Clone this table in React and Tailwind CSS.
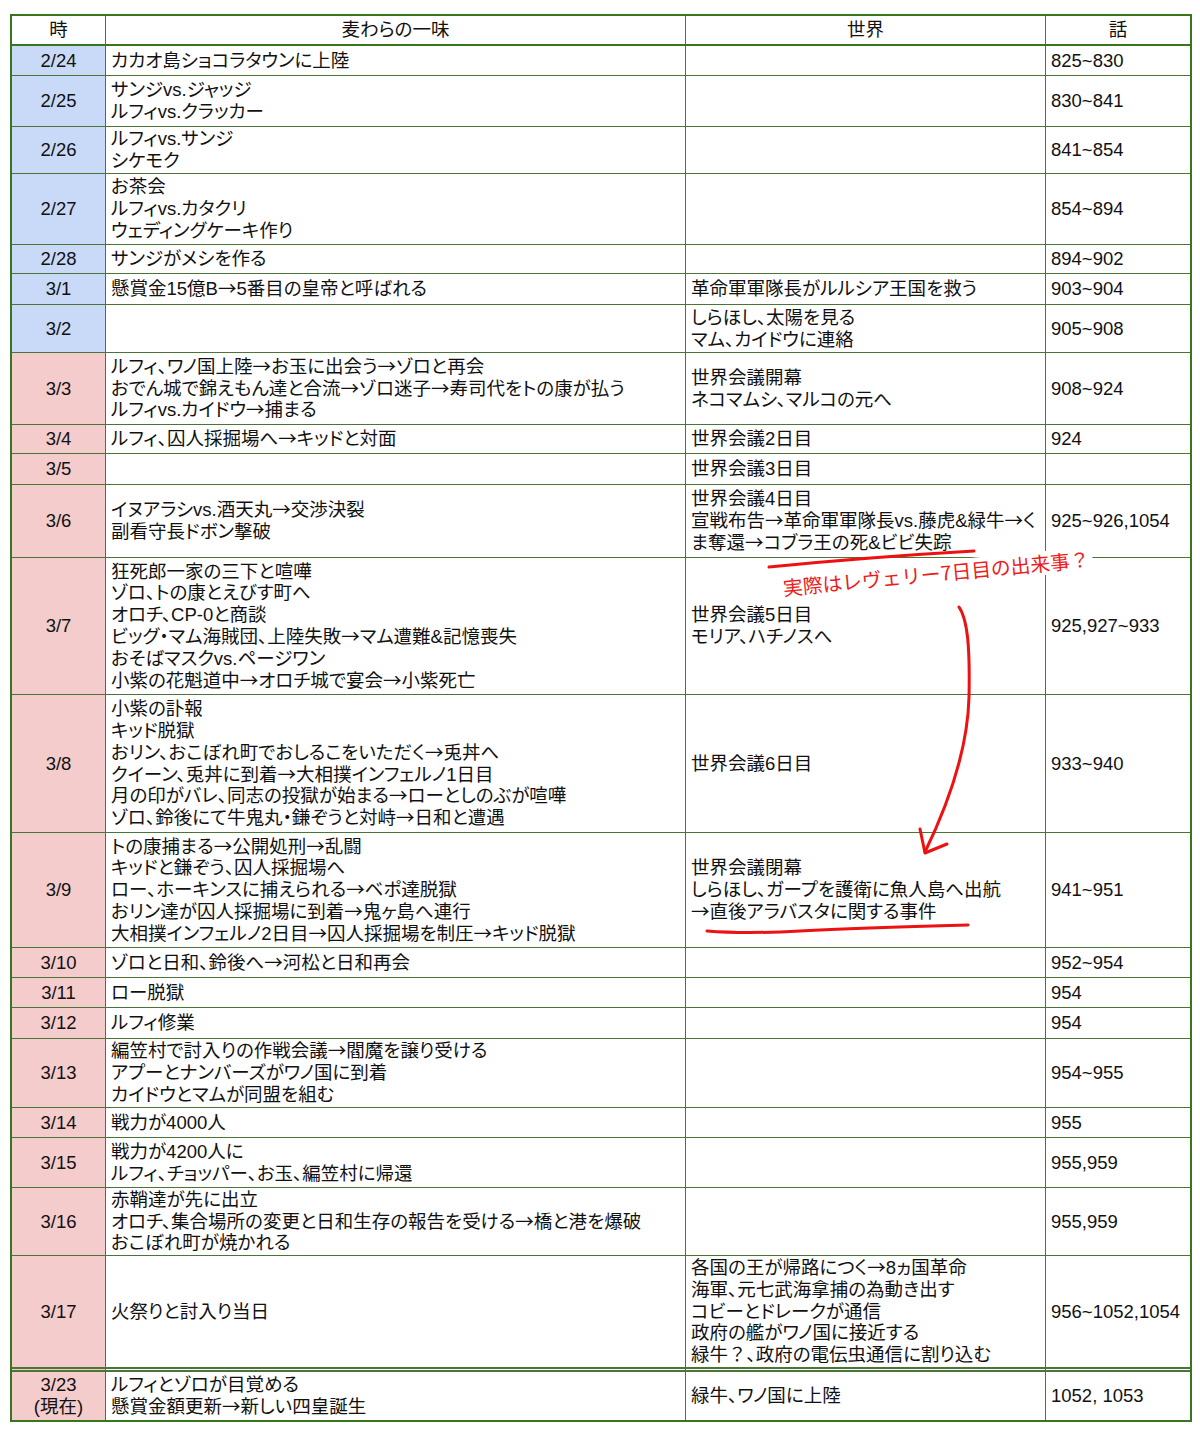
import React from "react";

const BLUE = "bg-[#c9daf8]";
const PINK = "bg-[#f4cccc]";

const rows = [
  { t: ["2/24"], a: ["カカオ島ショコラタウンに上陸"], w: [], n: "825~830", h: "h-[30px]", c: BLUE },
  { t: ["2/25"], a: ["サンジvs.ジャッジ", "ルフィvs.クラッカー"], w: [], n: "830~841", h: "h-[51px]", c: BLUE },
  { t: ["2/26"], a: ["ルフィvs.サンジ", "シケモク"], w: [], n: "841~854", h: "h-[47px]", c: BLUE },
  { t: ["2/27"], a: ["お茶会", "ルフィvs.カタクリ", "ウェディングケーキ作り"], w: [], n: "854~894", h: "h-[71px]", c: BLUE },
  { t: ["2/28"], a: ["サンジがメシを作る"], w: [], n: "894~902", h: "h-[29px]", c: BLUE },
  { t: ["3/1"], a: ["懸賞金15億B→5番目の皇帝と呼ばれる"], w: ["革命軍軍隊長がルルシア王国を救う"], n: "903~904", h: "h-[31px]", c: BLUE },
  { t: ["3/2"], a: [], w: ["しらほし、太陽を見る", "マム、カイドウに連絡"], n: "905~908", h: "h-[48px]", c: BLUE },
  { t: ["3/3"], a: ["ルフィ、ワノ国上陸→お玉に出会う→ゾロと再会", "おでん城で錦えもん達と合流→ゾロ迷子→寿司代をトの康が払う", "ルフィvs.カイドウ→捕まる"], w: ["世界会議開幕", "ネコマムシ、マルコの元へ"], n: "908~924", h: "h-[72px]", c: PINK },
  { t: ["3/4"], a: ["ルフィ、囚人採掘場へ→キッドと対面"], w: ["世界会議2日目"], n: "924", h: "h-[29px]", c: PINK },
  { t: ["3/5"], a: [], w: ["世界会議3日目"], n: "", h: "h-[31px]", c: PINK },
  { t: ["3/6"], a: ["イヌアラシvs.酒天丸→交渉決裂", "副看守長ドボン撃破"], w: ["世界会議4日目", "宣戦布告→革命軍軍隊長vs.藤虎&緑牛→く", "ま奪還→コブラ王の死&ビビ失踪"], n: "925~926,1054", h: "h-[73px]", c: PINK },
  { t: ["3/7"], a: ["狂死郎一家の三下と喧嘩", "ゾロ、トの康とえびす町へ", "オロチ、CP-0と商談", "ビッグ・マム海賊団、上陸失敗→マム遭難&記憶喪失", "おそばマスクvs.ページワン", "小紫の花魁道中→オロチ城で宴会→小紫死亡"], w: ["世界会議5日目", "モリア、ハチノスへ"], n: "925,927~933", h: "h-[137px]", c: PINK },
  { t: ["3/8"], a: ["小紫の訃報", "キッド脱獄", "おリン、おこぼれ町でおしるこをいただく→兎丼へ", "クイーン、兎丼に到着→大相撲インフェルノ1日目", "月の印がバレ、同志の投獄が始まる→ローとしのぶが喧嘩", "ゾロ、鈴後にて牛鬼丸・鎌ぞうと対峙→日和と遭遇"], w: ["世界会議6日目"], n: "933~940", h: "h-[138px]", c: PINK },
  { t: ["3/9"], a: ["トの康捕まる→公開処刑→乱闘", "キッドと鎌ぞう、囚人採掘場へ", "ロー、ホーキンスに捕えられる→ベポ達脱獄", "おリン達が囚人採掘場に到着→鬼ヶ島へ連行", "大相撲インフェルノ2日目→囚人採掘場を制圧→キッド脱獄"], w: ["世界会議閉幕", "しらほし、ガープを護衛に魚人島へ出航", "→直後アラバスタに関する事件"], n: "941~951", h: "h-[115px]", c: PINK },
  { t: ["3/10"], a: ["ゾロと日和、鈴後へ→河松と日和再会"], w: [], n: "952~954", h: "h-[30px]", c: PINK },
  { t: ["3/11"], a: ["ロー脱獄"], w: [], n: "954", h: "h-[30px]", c: PINK },
  { t: ["3/12"], a: ["ルフィ修業"], w: [], n: "954", h: "h-[31px]", c: PINK },
  { t: ["3/13"], a: ["編笠村で討入りの作戦会議→閻魔を譲り受ける", "アプーとナンバーズがワノ国に到着", "カイドウとマムが同盟を組む"], w: [], n: "954~955", h: "h-[69px]", c: PINK },
  { t: ["3/14"], a: ["戦力が4000人"], w: [], n: "955", h: "h-[30px]", c: PINK },
  { t: ["3/15"], a: ["戦力が4200人に", "ルフィ、チョッパー、お玉、編笠村に帰還"], w: [], n: "955,959", h: "h-[50px]", c: PINK },
  { t: ["3/16"], a: ["赤鞘達が先に出立", "オロチ、集合場所の変更と日和生存の報告を受ける→橋と港を爆破", "おこぼれ町が焼かれる"], w: [], n: "955,959", h: "h-[68px]", c: PINK },
  { t: ["3/17"], a: ["火祭りと討入り当日"], w: ["各国の王が帰路につく→8ヵ国革命", "海軍、元七武海拿捕の為動き出す", "コビーとドレークが通信", "政府の艦がワノ国に接近する", "緑牛？、政府の電伝虫通信に割り込む"], n: "956~1052,1054", h: "h-[116px]", c: PINK, dbl: true },
  { t: ["3/23", "(現在)"], a: ["ルフィとゾロが目覚める", "懸賞金額更新→新しい四皇誕生"], w: ["緑牛、ワノ国に上陸"], n: "1052, 1053", h: "h-[48px]", c: PINK, last: true },
];

function fmt(s) {
  return s.split(/(→|？)/).map((p, i) =>
    p === "→" || p === "？" ? (
      <span key={i} className="font-['Noto_Sans_CJK_JP',sans-serif] [font-feature-settings:normal] leading-[0]">
        {p}
      </span>
    ) : (
      p
    )
  );
}

function Lines({ items }) {
  return items.map((s, i) => (
    <div key={i} className="whitespace-nowrap h-[21.8px]">
      {fmt(s)}
    </div>
  ));
}

function Row({ r }) {
  const b = r.last
    ? ""
    : r.dbl
    ? "border-b-[5px] border-double border-b-[#4b7537]"
    : "border-b border-b-[#4b7537]";
  return (
    <div className={`grid grid-cols-[94px_580px_360px_144px] ${r.h}`}>
      <div className={`flex flex-col items-center justify-center text-center border-r border-r-[#4b7537] ${b} ${r.c}`}>
        <Lines items={r.t} />
      </div>
      <div className={`flex flex-col justify-center px-[5px] border-r border-r-[#4b7537] ${b}`}>
        <Lines items={r.a} />
      </div>
      <div className={`flex flex-col justify-center px-[5px] border-r border-r-[#4b7537] ${b}`}>
        <Lines items={r.w} />
      </div>
      <div className={`flex flex-col justify-center px-[5px] ${b}`}>
        <div className="whitespace-nowrap">{r.n}</div>
      </div>
    </div>
  );
}

export default function App() {
  return (
    <div className="relative w-[1200px] h-[1430px] bg-white font-['Liberation_Sans','Noto_Sans_CJK_JP',sans-serif] text-[18.5px] leading-[21.8px] text-[#111] [font-feature-settings:'palt']">
      <div className="pt-[14px] pl-[10px]">
        <div className="w-[1182px] border-2 border-[#38761d]">
          <div className="grid grid-cols-[94px_580px_360px_144px] h-[30px]">
            <div className="flex items-center justify-center border-r border-r-[#4b7537] border-b-2 border-b-[#38761d]">時</div>
            <div className="flex items-center justify-center border-r border-r-[#4b7537] border-b-2 border-b-[#38761d]">麦わらの一味</div>
            <div className="flex items-center justify-center border-r border-r-[#4b7537] border-b-2 border-b-[#38761d]">世界</div>
            <div className="flex items-center justify-center border-b-2 border-b-[#38761d]">話</div>
          </div>
          {rows.map((r, i) => (
            <Row key={i} r={r} />
          ))}
        </div>
      </div>

      <div className="absolute left-[780px] top-[576px] origin-left -rotate-[5.4deg] bg-white px-[3px] py-[1px] text-[19.8px] leading-[22px] text-[#ee1b1b] whitespace-nowrap font-['Noto_Sans_CJK_JP',sans-serif] [font-feature-settings:normal]">
        実際はレヴェリー7日目の出来事？
      </div>

      <svg className="absolute left-0 top-0 pointer-events-none" width="1200" height="1430" viewBox="0 0 1200 1430" fill="none">
        <path d="M769 567 Q 870 557 974 551" stroke="#ee1111" strokeWidth="3" strokeLinecap="round" />
        <path d="M959 607 C 968 620, 970 650, 969 697 C 968 740, 955 790, 925 852" stroke="#ee1111" strokeWidth="3" strokeLinecap="round" />
        <path d="M920 829 L 925 853 L 947 844" stroke="#ee1111" strokeWidth="3" strokeLinecap="round" strokeLinejoin="round" />
        <path d="M707 931 Q 745 934 800 931 T 968 925" stroke="#ee1111" strokeWidth="3" strokeLinecap="round" />
      </svg>
    </div>
  );
}
